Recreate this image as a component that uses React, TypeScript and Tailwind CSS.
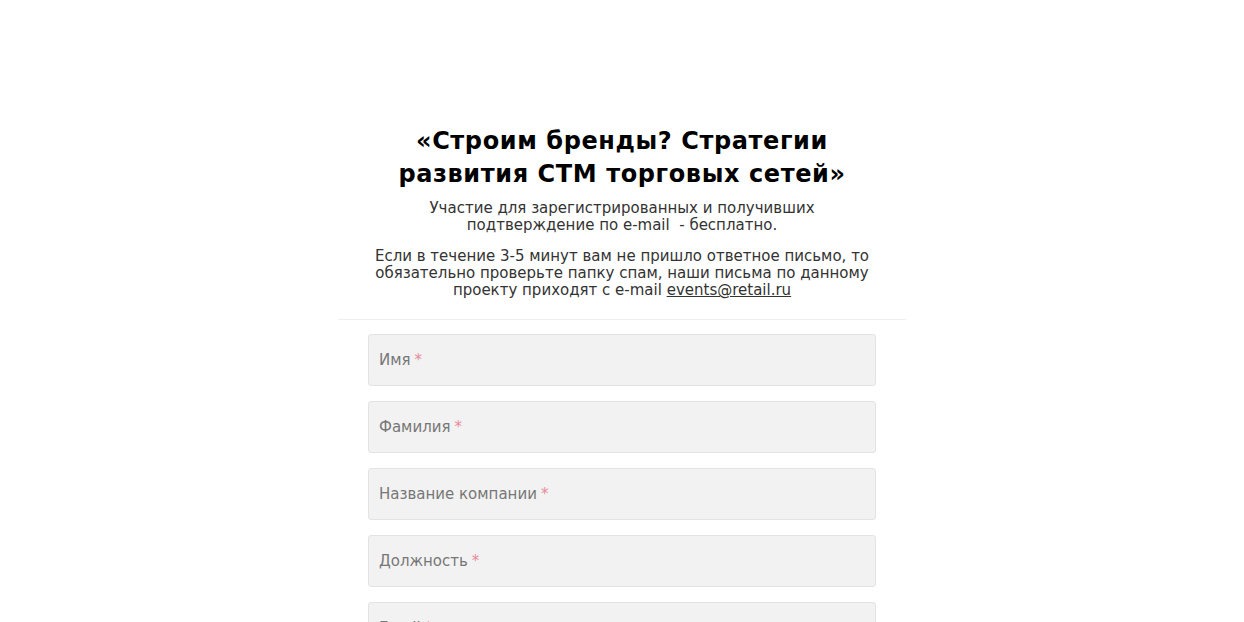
const fields = ['Имя', 'Фамилия', 'Название компании', 'Должность', 'Email'];

export default function App() {
  return (
    <div className="min-h-screen bg-white" style={{ fontFamily: '"DejaVu Sans", sans-serif' }}>
      <div className="mx-auto w-[568px] pt-[125px]">
        {/* Header */}
        <div className="px-[30px] pb-[20px] text-center border-b border-[#eeeeee]">
          <h1 className="text-[24px] font-bold leading-[33px] text-black tracking-[0.6px]">
            «Строим бренды? Стратегии развития СТМ торговых сетей»
          </h1>
          <p className="mt-[9px] text-[15px] leading-[17px] text-[#333333]">
            Участие для зарегистрированных и получивших подтверждение по e-mail&nbsp; - бесплатно.
          </p>
          <p className="mt-[14px] text-[15px] leading-[17px] text-[#333333]">
            Если в течение 3-5 минут вам не пришло ответное письмо, то обязательно проверьте папку спам, наши письма по данному проекту приходят с e-mail{' '}
            <a href="#" className="underline">events@retail.ru</a>
          </p>
        </div>

        {/* Form */}
        <div className="px-[30px] pt-[14px] flex flex-col gap-[15px]">
          {fields.map((f) => (
            <div
              key={f}
              className="h-[52px] flex items-center px-[10px] bg-[#f2f2f2] border border-[#e3e3e3] rounded-[3px] text-[15px] text-[#777777]"
            >
              {f}
              <span className="ml-[4px] text-[#e88a9a]">*</span>
            </div>
          ))}
        </div>
      </div>
    </div>
  );
}
